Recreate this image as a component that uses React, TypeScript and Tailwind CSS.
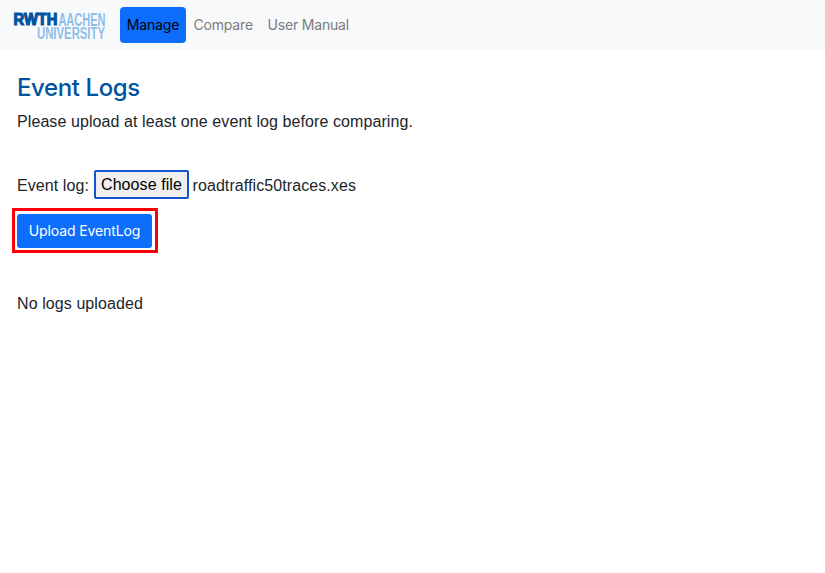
function Logo() {
  return (
    <svg
      width="94"
      height="36"
      viewBox="0 0 94 36"
      className="shrink-0 overflow-visible font-['Liberation_Sans',Arial,sans-serif] tracking-normal"
      role="img"
      aria-label="RWTH Aachen University"
    >
      <text x="1.6" y="18.3" fontSize="16.6" fontWeight="700" textLength="43.8" lengthAdjust="spacingAndGlyphs" fill="#00549f" stroke="#00549f" strokeWidth="1.2">RWTH</text>
      <text x="46.4" y="18.5" fontSize="17.6" fontWeight="700" textLength="47" lengthAdjust="spacingAndGlyphs" fill="#8ebeec">AACHEN</text>
      <text x="25" y="32.3" fontSize="17.4" fontWeight="700" textLength="68" lengthAdjust="spacingAndGlyphs" fill="#8ebeec">UNIVERSITY</text>
    </svg>
  );
}

export default function App() {
  return (
    <div className="min-h-screen bg-white font-['Liberation_Sans',Arial,sans-serif] text-base tracking-[0.085px] text-[#212529]">
      <nav className="flex h-[50px] items-center bg-[#f8f9fa] pl-3 font-[Inter,sans-serif] text-sm tracking-[-0.18px] text-[#7b7c7d]">
        <Logo />
        <a className="ml-[14px] flex h-9 w-[66px] items-center justify-center rounded bg-[#0d6efd] text-black">Manage</a>
        <a className="ml-[7.5px] w-[60px]">Compare</a>
        <a className="ml-[14px] whitespace-nowrap">User Manual</a>
      </nav>
      <main className="flex flex-col items-start pl-[17px] pt-[23px]">
        <h1 className="font-[Inter,sans-serif] text-2xl leading-[29px] font-medium tracking-[-0.4px] text-[#00549f]">Event Logs</h1>
        <p className="mt-2 leading-6">Please upload at least one event log before comparing.</p>
        <div className="mt-9 flex h-[29px] items-center whitespace-nowrap">
          <span className="mt-0.5 w-[72px]">Event log:</span>
          <button className="ml-[5px] h-[29px] w-[95px] rounded-[2px] border-2 border-[#1155cc] bg-[#efefef] leading-[25px] text-black">Choose file</button>
          <span className="ml-[3.5px] mt-0.5">roadtraffic50traces.xes</span>
        </div>
        <div className="-ml-[5px] mt-[9px] h-[45px] w-[146px] border-[3px] border-[#fb0007] pl-[2px] pt-[3px]">
          <button className="h-[34px] w-[135px] rounded-[3px] bg-[#0d6efd] font-[Inter,sans-serif] text-sm tracking-[-0.1px] text-white">Upload EventLog</button>
        </div>
        <p className="mt-[39px] leading-6">No logs uploaded</p>
      </main>
    </div>
  );
}
